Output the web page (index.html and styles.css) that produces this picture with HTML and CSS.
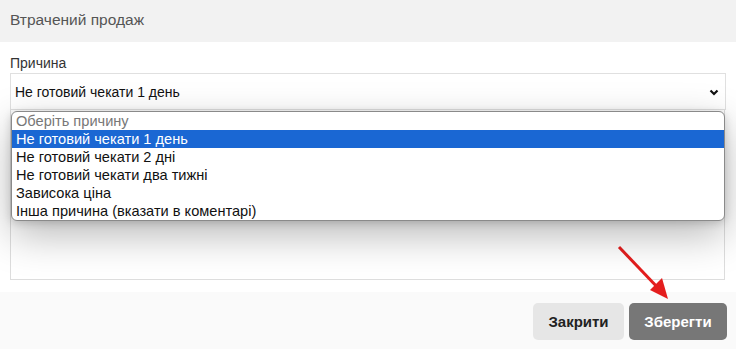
FILE: index.html
```html
<!DOCTYPE html>
<html lang="uk">
<head>
    <meta charset="UTF-8">
    <meta name="viewport" content="width=device-width, initial-scale=1.0">
    <title>Втрачений продаж</title>
    <link rel="stylesheet" href="styles.css">
</head>
<body>
<div class="modal">
    <div class="modal-header">Втрачений продаж</div>

    <div class="modal-body">
        <label class="label">Причина</label>
        <div class="field">
            <div class="select">
                <span>Не готовий чекати 1 день</span>
                <svg class="chevron" width="10" height="7" viewBox="0 0 10 7">
                    <path d="M1.5 1.5 L5 5 L8.5 1.5" fill="none" stroke="#111" stroke-width="2.2"/>
                </svg>
            </div>
            <ul class="dropdown">
                <li class="placeholder">Оберіть причину</li>
                <li class="selected">Не готовий чекати 1 день</li>
                <li>Не готовий чекати 2 дні</li>
                <li>Не готовий чекати два тижні</li>
                <li>Зависока ціна</li>
                <li>Інша причина (вказати в коментарі)</li>
            </ul>
        </div>
        <div class="textarea"></div>
    </div>

    <div class="modal-footer">
        <button class="btn btn-close">Закрити</button>
        <button class="btn btn-save">Зберегти</button>
    </div>

    <svg class="pointer" width="60" height="60" viewBox="0 0 60 60">
        <line x1="3" y1="3" x2="44" y2="46" stroke="#e41e1e" stroke-width="3"/>
        <polygon points="52,55 34,46 46,34" fill="#e41e1e"/>
    </svg>
</div>
</body>
</html>
```

FILE: styles.css
```css
body { margin: 0; font-family: Arial, "Liberation Sans", sans-serif; background: #fff; }
.modal { position: relative; width: 736px; height: 350px; overflow: hidden; }
.modal-header { height: 42px; line-height: 40px; padding-left: 10px; background: #f2f2f2; color: #555; font-size: 15.5px; }
.modal-body { padding: 13px 10px 12px 10px; background: #fff; }
.label { display: block; font-size: 14px; line-height: 16px; color: #333; margin-bottom: 2px; }
.field { position: relative; }
.select { height: 35px; border: 1px solid #e0e0e0; display: flex; align-items: center; justify-content: space-between; padding: 0 6px 0 4px; font-size: 14px; color: #111; }
.chevron { margin-top: 1px; }
.dropdown { position: absolute; left: 1px; top: 38px; width: 712px; margin: 0; padding: 0; list-style: none; background: #fff; border: 1px solid #8a8a8a; border-radius: 6px; box-shadow: 0 14px 40px rgba(0,0,0,0.28), 0 2px 8px rgba(0,0,0,0.16); font-size: 14.6px; overflow: hidden; z-index: 2; }
.dropdown li { height: 18px; line-height: 18px; padding-left: 4px; color: #111; }
.dropdown .placeholder { color: #777; }
.dropdown .selected { background: #1a67d3; color: #fff; }
.textarea { height: 169px; border: 1px solid #ddd; border-top: none; margin-right: 1px; background: #fff; }
.modal-footer { height: 57px; background: #fafafa; display: flex; justify-content: flex-end; align-items: flex-start; gap: 5px; padding: 11px 9px 0 0; box-sizing: border-box; }
.btn { height: 37px; border: none; border-radius: 5px; font-family: Arial, "Liberation Sans", sans-serif; font-size: 15px; font-weight: bold; padding: 0; }
.btn-close { background: #e6e6e6; color: #222; width: 91px; }
.btn-save { background: #777; color: #fff; width: 98px; }
.pointer { position: absolute; left: 616px; top: 244px; }
```
